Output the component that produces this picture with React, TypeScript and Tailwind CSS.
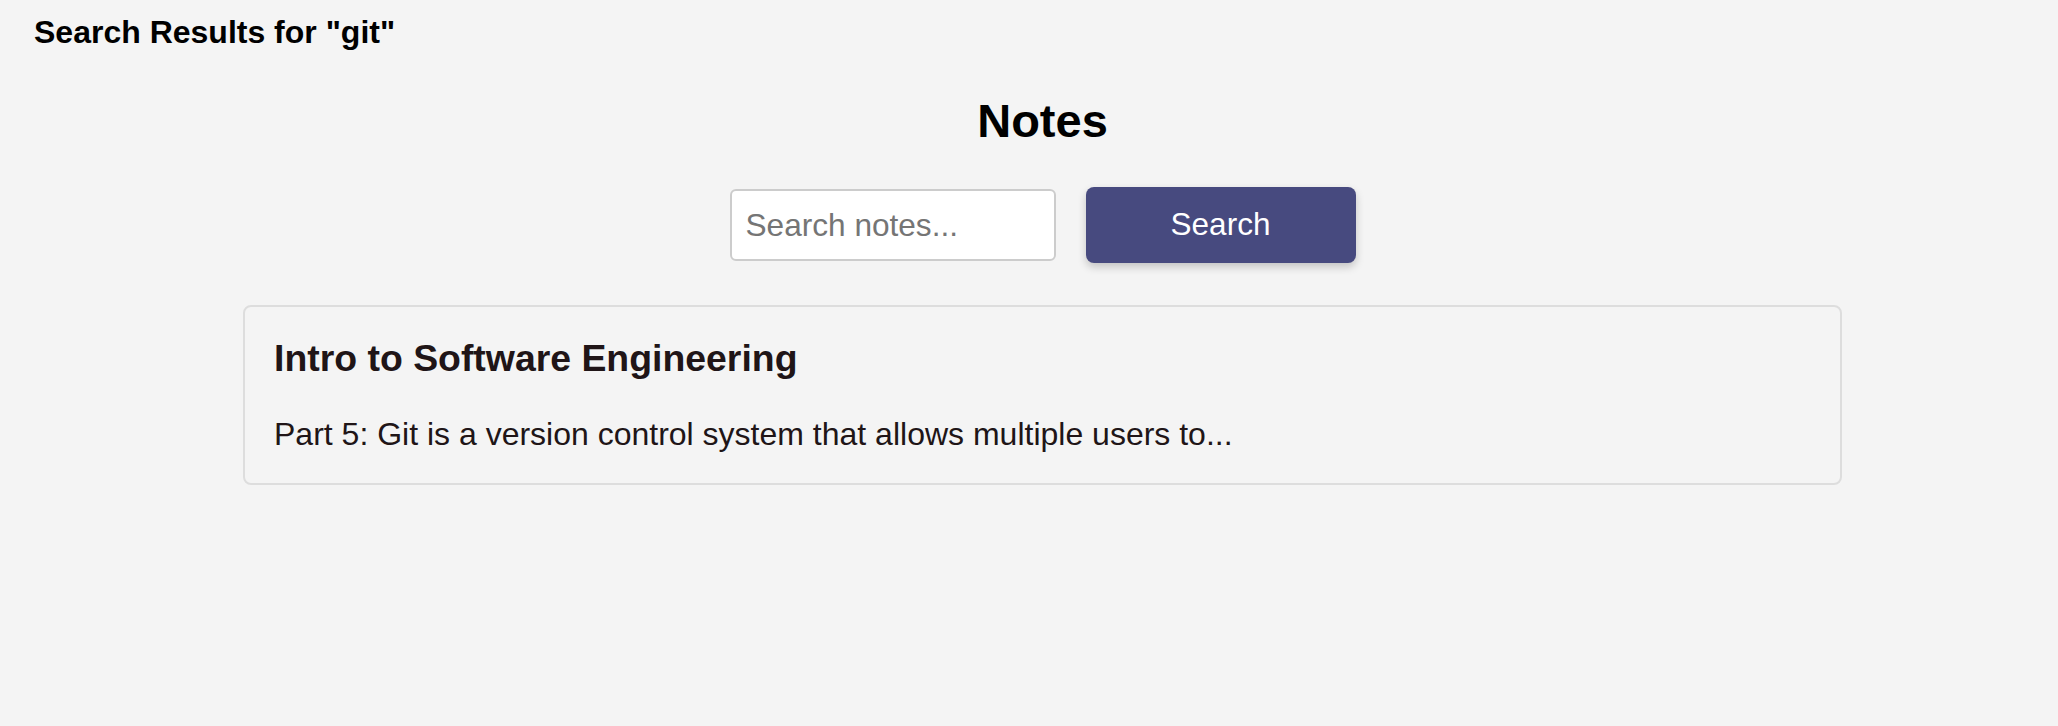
const font = "font-['Liberation_Sans',Arial,Helvetica,sans-serif]";

type Note = {
  title: string;
  excerpt: string;
};

const results: Note[] = [
  {
    title: "Intro to Software Engineering",
    excerpt:
      "Part 5: Git is a version control system that allows multiple users to..."
  }
];

function NoteCard({ note }: { note: Note }) {
  return (
    <article className="rounded-[8px] border-2 border-[#dddddd] px-[29px] pt-[29px] pb-[30px]">
      <h3 className="text-[37.4px] font-bold leading-[44px] text-[#201517]">
        {note.title}
      </h3>
      <p className="mt-[36px] text-[32px] leading-[37px] text-[#201517]">
        {note.excerpt}
      </p>
    </article>
  );
}

export default function App() {
  return (
    <div className={`min-h-[726px] w-full bg-[#f4f4f4] pl-[27px] ${font}`}>
      <h2 className="ml-[7px] pt-[14px] text-[32px] font-bold leading-[36px] text-black">
        Search Results for "git"
      </h2>

      <h1 className="mt-[44px] text-center text-[47px] font-bold leading-[54px] text-black">
        Notes
      </h1>

      <div className="mt-[39px] flex items-center justify-center gap-[30px]">
        <input
          type="text"
          placeholder="Search notes..."
          className="h-[72px] w-[326px] rounded-[6px] border-2 border-[#cccccc] bg-white pl-[14px] text-[31.6px] text-black outline-none placeholder:text-[#757575]"
        />
        <button
          type="button"
          className="h-[76px] w-[270px] rounded-[8px] bg-[#474a7f] text-[31.5px] text-white shadow-[0_4px_8px_rgba(0,0,0,0.2)]"
        >
          Search
        </button>
      </div>

      <div className="mx-auto mt-[42px] w-[1599px]">
        {results.map((note) => (
          <NoteCard key={note.title} note={note} />
        ))}
      </div>
    </div>
  );
}
